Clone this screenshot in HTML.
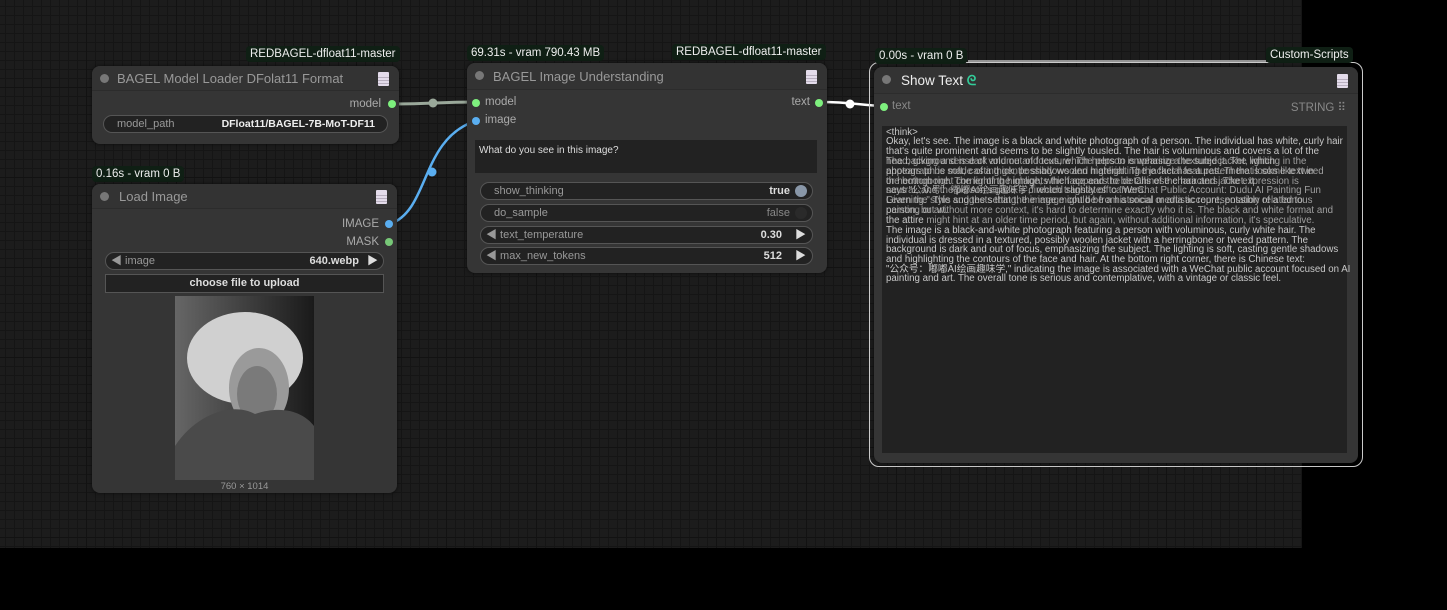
<!DOCTYPE html>
<html><head><meta charset="utf-8"><style>
*{margin:0;padding:0;box-sizing:border-box}
body{width:1447px;height:610px;background:#000;position:relative;overflow:hidden;font-family:"Liberation Sans","Noto Sans CJK SC",sans-serif}
.canvas{position:absolute;left:0;top:0;width:1302px;height:548px;background-color:#1c1c1c;
background-image:linear-gradient(#121212 1px,transparent 1px),linear-gradient(90deg,#121212 1px,transparent 1px),linear-gradient(#151515 1px,transparent 1px),linear-gradient(90deg,#151515 1px,transparent 1px);
background-size:90px 90px,90px 90px,9px 9px,9px 9px;background-position:-4px -3px}
.node{position:absolute;background:#353535;border-radius:8px;box-shadow:0 0 4px rgba(0,0,0,.6)}
.title{position:absolute;left:0;right:0;top:0;height:25px;border-bottom:1px solid #2c2c2c;border-radius:8px 8px 0 0;background:#333;color:#999;font-size:13px;line-height:25px;padding-left:25px}
.title .dot{position:absolute;left:8px;top:8px;width:9px;height:9px;border-radius:50%;background:#777}
.doc{position:absolute;top:6px;right:10px;width:11px;height:14px;border-radius:1px;background:linear-gradient(#e4dceb 0,#e4dceb 5px,#b9b0c0 5px,#b9b0c0 6px,#e4dceb 6px,#e4dceb 8px,#b9b0c0 8px,#b9b0c0 9px,#e4dceb 9px,#e4dceb 11px,#b9b0c0 11px,#b9b0c0 12px,#e4dceb 12px)}
.badge{position:absolute;height:16px;background:#0f1f14;color:#eee;font-size:11.5px;line-height:16px;padding:0 4px;border-radius:4px;white-space:nowrap}
.lbl{position:absolute;font-size:11.5px;color:#aaa;white-space:nowrap}
.port{position:absolute;width:8px;height:8px;border-radius:50%}
.g{background:#7ef07e}.b{background:#5aaef0}.gg{background:#77c777}
.w{position:absolute;height:18px;border:1px solid #555;border-radius:9px;background:#222;font-size:11px;line-height:16px;color:#999;white-space:nowrap}
.w .v{position:absolute;right:12px;top:0;color:#ddd}
.txt{position:absolute;left:886px;color:#c8c8c8;font-size:9.7px;white-space:nowrap;line-height:10px}
</style></head><body>
<div class="canvas"></div>

<svg style="position:absolute;left:0;top:0" width="1447" height="610">
<path d="M396 104 C430 104 440 102 475 102" stroke="#9aa89a" stroke-width="3" fill="none"/>
<circle cx="433" cy="103" r="4.5" fill="#9aa89a"/>
<path d="M390 224 C430 210 420 140 475 121" stroke="#5aaef0" stroke-width="2.5" fill="none"/>
<circle cx="432" cy="172" r="4.5" fill="#5aaef0"/>
<path d="M820 102 C850 102 860 105 882 106" stroke="#fff" stroke-width="2.5" fill="none"/>
<circle cx="850" cy="104" r="4.5" fill="#fff"/>
<line x1="968" y1="61" x2="1266" y2="61" stroke="#bbb" stroke-width="1.5"/>
</svg>

<!-- Loader -->
<div class="badge" style="left:246px;top:46px">REDBAGEL-dfloat11-master</div>
<div class="node" style="left:92px;top:66px;width:307px;height:78px">
 <div class="title"><span class="dot"></span>BAGEL Model Loader DFolat11 Format<span class="doc"></span></div>
 <div class="lbl" style="right:18px;top:32px">model</div>
 <div class="port g" style="right:3px;top:34px"></div>
 <div class="w" style="left:11px;top:49px;width:285px"><span style="margin-left:13px">model_path</span><span class="v" style="color:#eee;font-weight:bold;font-size:10.5px">DFloat11/BAGEL-7B-MoT-DF11</span></div>
</div>

<!-- Load Image -->
<div class="badge" style="left:92px;top:166px">0.16s - vram 0 B</div>
<div class="node" style="left:92px;top:184px;width:305px;height:309px">
 <div class="title" style="padding-left:27px;font-size:13px"><span class="dot"></span>Load Image<span class="doc"></span></div>
 <div class="lbl" style="right:18px;top:34px">IMAGE</div>
 <div class="port b" style="right:4px;top:36px"></div>
 <div class="lbl" style="right:18px;top:52px">MASK</div>
 <div class="port gg" style="right:4px;top:54px"></div>
 <div class="w" style="left:13px;top:68px;width:279px"><span style="margin-left:5px">◀ image</span><span class="v" style="right:24px;font-weight:bold">640.webp</span><span style="position:absolute;right:5px;color:#ddd">▶</span></div>
 <div style="position:absolute;left:13px;top:90px;width:279px;height:19px;background:#222;border:1px solid #555;color:#ddd;font-size:11px;font-weight:bold;text-align:center;line-height:17px">choose file to upload</div>
 <svg style="position:absolute;left:83px;top:112px" width="139" height="184">
  <defs><linearGradient id="bg" x1="0" x2="1"><stop offset="0" stop-color="#666"/><stop offset="1" stop-color="#1a1a1a"/></linearGradient></defs>
  <rect width="139" height="184" fill="url(#bg)"/>
  <ellipse cx="70" cy="62" rx="58" ry="46" fill="#d0d0d0"/>
  <ellipse cx="84" cy="92" rx="30" ry="40" fill="#9a9a9a"/>
  <ellipse cx="82" cy="98" rx="20" ry="28" fill="#7a7a7a"/>
  <path d="M0 150 C20 120 55 105 80 118 C110 108 130 118 139 130 L139 184 L0 184 Z" fill="#4a4a4a"/>
 </svg>
 <div style="position:absolute;left:0;right:0;top:297px;text-align:center;color:#999;font-size:9.5px">760 × 1014</div>
</div>

<!-- Understanding -->
<div class="badge" style="left:467px;top:45px">69.31s - vram 790.43 MB</div>
<div class="badge" style="left:672px;top:44px">REDBAGEL-dfloat11-master</div>
<div class="node" style="left:467px;top:63px;width:360px;height:210px">
 <div class="title" style="height:27px;line-height:27px;font-size:13px;padding-left:26px"><span class="dot"></span>BAGEL Image Understanding<span class="doc" style="top:7px"></span></div>
 <div class="port g" style="left:5px;top:36px"></div><div class="lbl" style="left:18px;top:33px">model</div>
 <div class="port b" style="left:5px;top:54px"></div><div class="lbl" style="left:18px;top:51px">image</div>
 <div class="lbl" style="right:17px;top:33px">text</div><div class="port g" style="right:4px;top:36px"></div>
 <div style="position:absolute;left:8px;top:77px;width:342px;height:33px;background:#222;color:#ddd;font-size:10px;padding:5px 4px">What do you see in this image?</div>
 <div class="w" style="left:13px;top:119px;width:333px"><span style="margin-left:13px">show_thinking</span><span class="v" style="right:22px;font-weight:bold">true</span><span style="position:absolute;right:5px;top:2px;width:12px;height:12px;border-radius:50%;background:#8997a8"></span></div>
 <div class="w" style="left:13px;top:141px;width:333px"><span style="margin-left:13px">do_sample</span><span class="v" style="right:22px;color:#888">false</span><span style="position:absolute;right:5px;top:2px;width:12px;height:12px;border-radius:50%;background:#2a2a2a"></span></div>
 <div class="w" style="left:13px;top:163px;width:333px"><span style="margin-left:5px">◀ text_temperature</span><span class="v" style="right:30px;font-weight:bold">0.30</span><span style="position:absolute;right:6px;color:#ddd">▶</span></div>
 <div class="w" style="left:13px;top:184px;width:333px"><span style="margin-left:5px">◀ max_new_tokens</span><span class="v" style="right:30px;font-weight:bold">512</span><span style="position:absolute;right:6px;color:#ddd">▶</span></div>
</div>

<!-- Show Text -->
<div style="position:absolute;left:869px;top:62px;width:494px;height:405px;border:1.5px solid #ccc;border-radius:10px"></div>
<div class="badge" style="left:875px;top:48px">0.00s - vram 0 B</div>
<div class="badge" style="left:1266px;top:47px">Custom-Scripts</div>
<div class="node" style="left:874px;top:67px;width:484px;height:396px;background:#353535">
 <div class="title" style="height:27px;line-height:27px;color:#eee;font-size:13.5px;padding-left:27px"><span class="dot"></span>Show Text <span style="color:#3c9;font-weight:bold">ᘓ</span><span class="doc" style="top:7px"></span></div>
 <div class="port g" style="left:6px;top:36px"></div><div class="lbl" style="left:18px;top:33px;color:#888">text</div>
 <div class="lbl" style="right:12px;top:33px;color:#888">STRING ⠿</div>
 <div style="position:absolute;left:8px;top:59px;width:465px;height:327px;background:#222"></div>
</div>
<div class="txt" style="top:128px">&lt;think&gt;</div>
<div class="txt" style="top:137px">Okay, let's see. The image is a black and white photograph of a person. The individual has white, curly hair</div>
<div class="txt" style="top:147px">that's quite prominent and seems to be slightly tousled. The hair is voluminous and covers a lot of the</div>
<div class="txt" style="top:157px;opacity:.75">head, giving a sense of volume and texture. The person is wearing a textured jacket, which</div>
<div class="txt" style="top:157px;opacity:.75">The background is dark and out of focus, which helps to emphasize the subject. The lighting in the</div>
<div class="txt" style="top:167px;opacity:.75">appears to be made of a thick, possibly woolen material. The jacket has a pattern that looks like tweed</div>
<div class="txt" style="top:167px;opacity:.75">photograph is soft, casting gentle shadows and highlighting the facial features. There is some text in</div>
<div class="txt" style="top:177px;opacity:.75">the bottom right corner of the image, which appears to be Chinese characters. The expression is</div>
<div class="txt" style="top:177px;opacity:.75">or herringbone. The lighting highlights the face and the details of the hair and jacket. It</div>
<div class="txt" style="top:186px;opacity:.75">says "公众号：嘟嘟AI绘画趣味学," which translates to "WeChat Public Account: Dudu AI Painting Fun</div>
<div class="txt" style="top:186px;opacity:.75">neutral, and the person's gaze is directed slightly off camera.</div>
<div class="txt" style="top:196px;opacity:.75">Learning." This suggests that the image might be from a social media account, possibly related to</div>
<div class="txt" style="top:196px;opacity:.75">Given the style and the setting, the image could be a historical or artistic representation of a famous</div>
<div class="txt" style="top:206px;opacity:.75">painting or art.</div>
<div class="txt" style="top:206px;opacity:.75">person, but without more context, it's hard to determine exactly who it is. The black and white format and</div>
<div class="txt" style="top:216px;opacity:.75">the attire might hint at an older time period, but again, without additional information, it's speculative.</div>
<div class="txt" style="top:216px;opacity:.75">the attire</div>
<div class="txt" style="top:226px">The image is a black-and-white photograph featuring a person with voluminous, curly white hair. The</div>
<div class="txt" style="top:236px">individual is dressed in a textured, possibly woolen jacket with a herringbone or tweed pattern. The</div>
<div class="txt" style="top:245px">background is dark and out of focus, emphasizing the subject. The lighting is soft, casting gentle shadows</div>
<div class="txt" style="top:255px">and highlighting the contours of the face and hair. At the bottom right corner, there is Chinese text:</div>
<div class="txt" style="top:265px">"公众号：嘟嘟AI绘画趣味学," indicating the image is associated with a WeChat public account focused on AI</div>
<div class="txt" style="top:274px">painting and art. The overall tone is serious and contemplative, with a vintage or classic feel.</div>
</body></html>
